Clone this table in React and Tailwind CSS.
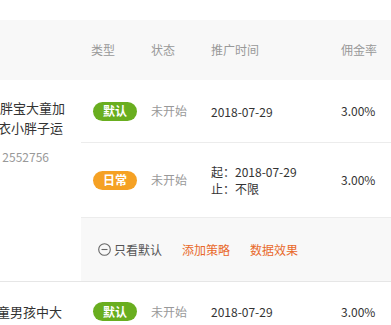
import React from "react";

const font = "font-['Noto_Sans_CJK_SC','Noto_Sans',sans-serif]";

function Badge({ kind }) {
  const cls = kind === "默认" ? "bg-[#69ae1f]" : "bg-[#f5a124]";
  return (
    <span className={`${cls} inline-flex items-center justify-center w-[44px] h-[19px] rounded-full text-white text-[12px] font-bold leading-none`}>
      {kind}
    </span>
  );
}

function StrategyRow({ kind, time, height }) {
  return (
    <div className={`flex items-center ${height} border-b border-[#ececec]`}>
      <div className="w-[60px] shrink-0 pl-[12px]">
        <Badge kind={kind} />
      </div>
      <div className="w-[60px] shrink-0 pl-[10px] text-[#999]">未开始</div>
      <div className="w-[130px] shrink-0 pl-[10px] text-[#333] leading-[17px]">{time}</div>
      <div className="flex-1 pl-[10px] text-[#333]">3.00%</div>
    </div>
  );
}

function MinusCircle() {
  return (
    <svg width="13" height="13" viewBox="0 0 13 13" className="shrink-0">
      <circle cx="6.5" cy="6.5" r="5.8" fill="none" stroke="#666" strokeWidth="1.1" />
      <line x1="3.5" y1="6.5" x2="9.5" y2="6.5" stroke="#666" strokeWidth="1.1" />
    </svg>
  );
}

export default function App() {
  return (
    <div className={`w-[391px] h-[325px] overflow-hidden bg-white text-[12px] ${font}`}>
      <div className="h-5" />
      {/* header */}
      <div className="h-[60px] bg-[#f8f8f8] flex items-center text-[#999]">
        <div className="w-[81px] shrink-0" />
        <div className="w-[60px] shrink-0 pl-[10px]">类型</div>
        <div className="w-[60px] shrink-0 pl-[10px]">状态</div>
        <div className="w-[130px] shrink-0 pl-[10px]">推广时间</div>
        <div className="flex-1 pl-[10px] whitespace-nowrap">佣金率</div>
      </div>

      {/* product 1 */}
      <div className="flex border-b border-[#e6e6e6]">
        <div className="w-[81px] shrink-0 pt-[18px] pr-[16px] text-right text-[13px] leading-[20px] text-[#333] whitespace-nowrap flex flex-col items-end">
          <div>宝宝男童胖宝大童加</div>
          <div className="pr-[2px]">冬装棉衣小胖子运</div>
          <div className="mt-[9px] pr-[16px] text-[12px] text-[#999]">商品ID：2552756</div>
        </div>
        <div className="flex-1 flex flex-col">
          <StrategyRow kind="默认" time="2018-07-29" height="h-[63px]" />
          <StrategyRow
            kind="日常"
            height="h-[75px]"
            time={
              <>
                <div>起：2018-07-29</div>
                <div>止：不限</div>
              </>
            }
          />
          <div className="h-[63px] bg-[#f8f8f8] flex items-center pl-[17px] gap-5">
            <div className="flex items-center gap-[3px] text-[#555]">
              <MinusCircle />
              <span>只看默认</span>
            </div>
            <span className="text-[#e8692b]">添加策略</span>
            <span className="text-[#e8692b]">数据效果</span>
          </div>
        </div>
      </div>

      {/* product 2 */}
      <div className="flex">
        <div className="w-[81px] shrink-0 pt-[20px] pr-[19px] text-right text-[13px] leading-[20px] text-[#333] whitespace-nowrap flex flex-col items-end">
          <div>冬季男童男孩中大</div>
          <div>童加厚羽绒棉衣</div>
        </div>
        <div className="flex-1 flex flex-col">
          <StrategyRow kind="默认" time="2018-07-29" height="h-[60px]" />
        </div>
      </div>
    </div>
  );
}
